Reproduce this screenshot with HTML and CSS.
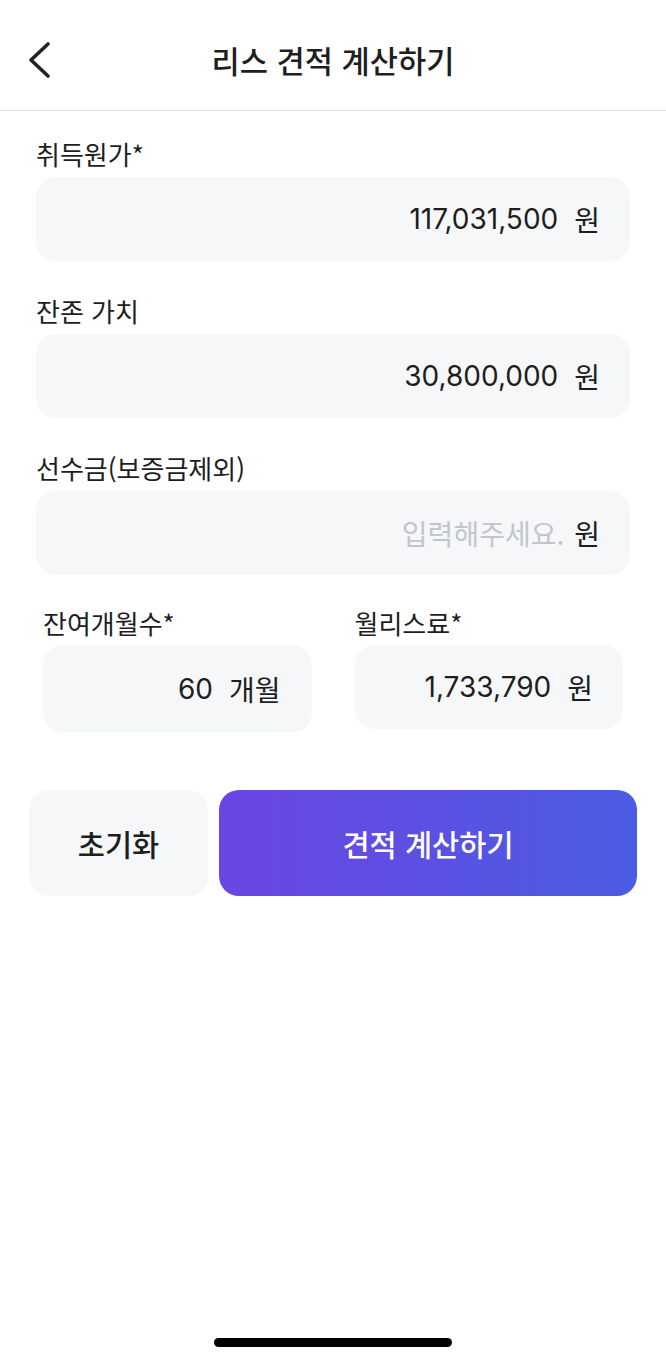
FILE: index.html
```html
<!DOCTYPE html>
<html lang="ko">
<head>
<meta charset="utf-8">
<title>리스 견적 계산하기</title>
<link rel="stylesheet" href="styles.css">
</head>
<body>
<div class="page">
  <header class="header">
    <div class="back">
      <svg width="26" height="38" viewBox="0 0 26 38" aria-hidden="true">
        <path d="M21 3 L4 19 L21 35" fill="none" stroke="#222" stroke-width="3.6" stroke-linecap="round" stroke-linejoin="round"/>
      </svg>
    </div>
    <h1 class="title">리스 견적 계산하기</h1>
    <div></div>
  </header>

  <main class="form">
    <div class="field">
      <div class="label">취득원가*</div>
      <div class="box"><span class="value">117,031,500</span><span class="unit">원</span></div>
    </div>
    <div class="field">
      <div class="label">잔존 가치</div>
      <div class="box"><span class="value">30,800,000</span><span class="unit">원</span></div>
    </div>
    <div class="field">
      <div class="label">선수금(보증금제외)</div>
      <div class="box"><span class="value placeholder">입력해주세요.</span><span class="unit tight">원</span></div>
    </div>
    <div class="row">
      <div class="col">
        <div class="label">잔여개월수*</div>
        <div class="box box-tall"><span class="value">60</span><span class="unit">개월</span></div>
      </div>
      <div class="col">
        <div class="label">월리스료*</div>
        <div class="box"><span class="value">1,733,790</span><span class="unit">원</span></div>
      </div>
    </div>
  </main>

  <div class="actions">
    <button class="btn btn-reset" type="button">초기화</button>
    <button class="btn btn-calc" type="button">견적 계산하기</button>
  </div>

  <div class="home-indicator"></div>
</div>
</body>
</html>
```

FILE: styles.css
```css
* { box-sizing: border-box; }
html, body { margin: 0; padding: 0; background: #ffffff; }
body {
  font-family: "Noto Sans CJK KR", "Noto Sans", sans-serif;
  color: #1e1e1e;
}
.page {
  width: 666px;
  min-height: 1362px;
  display: flex;
  flex-direction: column;
}
.header {
  height: 111px;
  padding-top: 10px;
  border-bottom: 1px solid #e4e4e6;
  display: grid;
  grid-template-columns: 1fr auto 1fr;
  align-items: center;
}
.back {
  padding-left: 27px;
  display: flex;
  align-items: center;
  height: 38px;
}
.title {
  margin: 0;
  font-size: 30.7px;
  font-weight: 500;
  color: #1e1e1e;
  line-height: 40px;
}
.form {
  padding: 27px 36px 0 36px;
}
.field {
  margin-bottom: 34px;
}
.label {
  font-size: 26px;
  line-height: 32px;
  height: 32px;
  color: #1e1e1e;
  margin-bottom: 7px;
}
.box {
  height: 84px;
  background: #f6f7f9;
  border-radius: 20px;
  display: flex;
  align-items: center;
  justify-content: flex-end;
  padding-right: 30px;
}
.value {
  font-family: "Inter", "Noto Sans CJK KR", sans-serif;
  font-size: 28px;
  color: #1e1e1e;
}
.placeholder {
  font-family: "Noto Sans CJK KR", sans-serif;
  color: #c3c5cd;
  font-size: 28px;
}
.unit {
  margin-left: 16px;
  font-size: 28px;
  color: #1e1e1e;
}
.unit.tight { margin-left: 10px; }
.row {
  display: grid;
  grid-template-columns: 1fr 1fr;
  column-gap: 43px;
  padding: 0 7px;
  margin-top: -2px;
}
.row .label { margin-bottom: 6px; }
.box-tall { height: 87px; padding-right: 31px; }
.actions {
  display: grid;
  grid-template-columns: 179px 1fr;
  column-gap: 11px;
  padding: 0 29px;
  margin-top: 58px;
}
.btn {
  height: 106px;
  border: 0;
  border-radius: 20px;
  font-family: "Noto Sans CJK KR", sans-serif;
  font-size: 29.5px;
  padding: 0;
  cursor: pointer;
}
.btn-reset {
  background: #f6f7f9;
  color: #1e1e1e;
  font-weight: 500;
}
.btn-calc {
  background: linear-gradient(90deg, #6b45e3 0%, #4b5ce4 100%);
  color: #ffffff;
  font-weight: 500;
}
.home-indicator {
  margin: auto auto 15px auto;
  width: 238px;
  height: 9px;
  border-radius: 5px;
  background: #000000;
}
```
